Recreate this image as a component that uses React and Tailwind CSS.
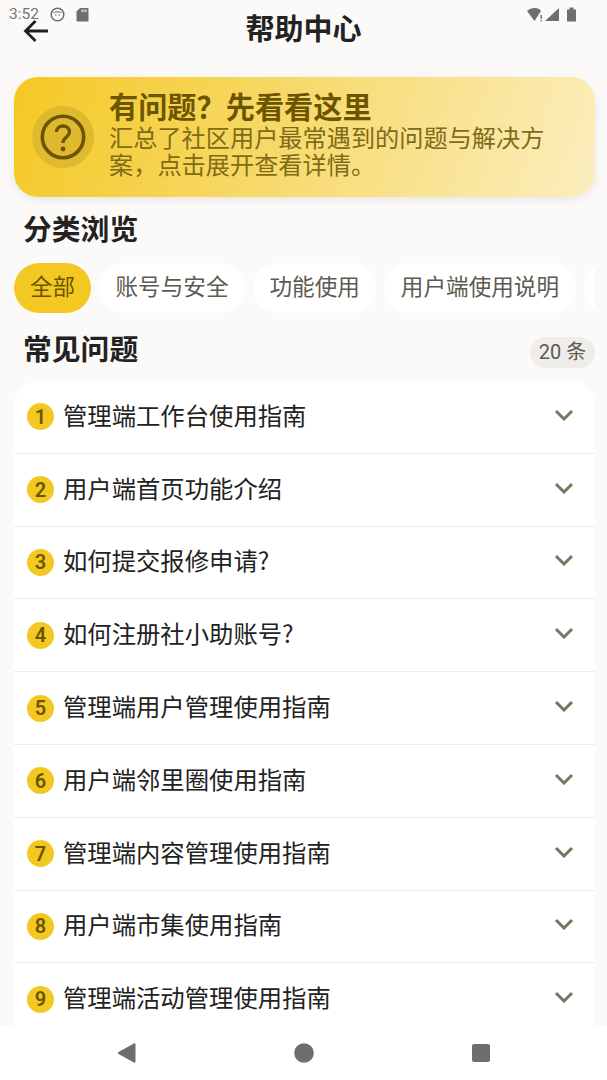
import React from 'react';

const items = ['管理端工作台使用指南','用户端首页功能介绍','如何提交报修申请?','如何注册社小助账号?','管理端用户管理使用指南','用户端邻里圈使用指南','管理端内容管理使用指南','用户端市集使用指南','管理端活动管理使用指南'];
const chips = ['账号与安全','功能使用','用户端使用说明'];

export default function App() {
  return (
    <div lang="zh-CN" className="relative flex h-[1080px] w-[607px] flex-col overflow-hidden bg-[#fcfaf8] font-['Roboto','Noto_Sans_CJK_SC',sans-serif]">
      <div className="absolute left-[9px] right-[30px] top-[6px] flex h-[16px] items-center text-[15.500px] leading-[16px] text-[#757575]">
        <span>3:52</span>
        <svg className="ml-[11px]" width="15" height="15" viewBox="0 0 15 15">
          <circle cx="7.500" cy="7.500" r="6.300" fill="#fff" stroke="#6e6e6e" strokeWidth="1.600" />
          <path d="M3 6.500C3 3.500 12 3.500 12 6.500L10 5.500H5Z" fill="#6e6e6e" />
          <circle cx="5.800" cy="8" r=".8" fill="#6e6e6e" /><circle cx="9.200" cy="8" r=".8" fill="#6e6e6e" />
        </svg>
        <svg className="ml-[11px]" width="13" height="15" viewBox="0 0 13 15">
          <path d="M4 1H11.500A1 1 0 0 1 12.500 2V13.500A1 1 0 0 1 11.500 14.500H1.500A1 1 0 0 1 .5 13.500V4.500Z" fill="#6e6e6e" />
          <path d="M6 2.500V5M8 2.500V5M10 2.500V5" stroke="#fff" strokeWidth="1" />
        </svg>
        <div className="flex-1" />
        <svg width="50" height="16" viewBox="0 0 50 16">
          <path d="M0 5C4 1 12 1 14 5L7.500 15Z" fill="#6e6e6e" />
          <rect x="13.500" y="9" width="1.400" height="4" fill="#6e6e6e" /><rect x="13.500" y="14" width="1.400" height="1.400" fill="#6e6e6e" />
          <path d="M18 15L32 2V15Z" fill="#6e6e6e" />
          <path d="M40 3.500H42.500V1.500H46.500V3.500H49V15.500H40Z" fill="#6e6e6e" />
        </svg>
      </div>

      <header className="relative flex h-[60px] shrink-0 items-center justify-center">
        <svg className="absolute left-[22px] top-[18px]" width="28" height="26" viewBox="0 0 28 26" fill="none" stroke="#1f1f1f" strokeWidth="2.800">
          <path d="M26 13H4M13.500 3L3.500 13L13.500 23" />
        </svg>
        <h1 className="text-[29px] font-semibold leading-[36px] text-[#222222]">帮助中心</h1>
      </header>

      <main className="min-h-0 flex-1 overflow-hidden pl-[14px] pr-[12px] pt-[17px]">
        <section className="flex h-[120px] items-center rounded-[24px] bg-[linear-gradient(110deg,#f4c823,#fbeebf)] pl-[18px] pr-[30px] shadow-[0_3px_10px_rgba(0,0,0,0.08)]">
          <div className="flex h-[62px] w-[62px] shrink-0 items-center justify-center rounded-full bg-[#dfb930]">
            <svg width="48" height="48" viewBox="0 0 48 48" fill="none" stroke="#6b5500" strokeWidth="3.600">
              <circle cx="24" cy="24" r="20.700" />
              <path d="M17.500 19C17.500 11 30.500 11 30.500 19C30.500 24 24 24 24 30" strokeWidth="3.400" />
              <circle cx="24" cy="36" r="2.400" fill="#6b5500" stroke="none" />
            </svg>
          </div>
          <div className="ml-[15px] min-w-0 flex-1 pb-[11px]">
            <h2 className="font-['Noto_Sans_CJK_SC',sans-serif] text-[29.200px] font-bold leading-[36px] text-[#6b5500]">有问题{'\uFF1F'}先看看这里</h2>
            <p className="font-['Noto_Sans_CJK_SC',sans-serif] text-[24.200px] leading-[27px] text-[#806b17]">汇总了社区用户最常遇到的问题与解决方案{'\uFF0C'}点击展开查看详情{'\u3002'}</p>
          </div>
        </section>

        <h2 className="ml-[9px] mt-[13px] text-[28.800px] font-semibold leading-[40px] text-[#222222]">分类浏览</h2>

        <div className="mt-[13px] flex h-[50px] gap-[8px] overflow-hidden">
          <div className="flex shrink-0 items-center rounded-full bg-[#f4c823] px-[16px] text-[22.500px] text-[#6b5500]">全部</div>
          {chips.map((c) => (
            <div key={c} className="flex shrink-0 items-center rounded-full bg-white px-[16.500px] text-[22.600px] text-[#5d5a50]">{c}</div>
          ))}
          <div className="flex shrink-0 items-center rounded-full bg-white px-[17px] text-[22.500px] text-[#5d5a50]">物业</div>
        </div>

        <div className="ml-[9px] mt-[17px] flex h-[40px] items-center justify-between">
          <h2 className="text-[28.800px] font-semibold leading-[40px] text-[#222222]">常见问题</h2>
          <span className="mt-[4px] flex h-[31px] w-[65px] items-center justify-center rounded-full bg-[#efedea] text-[20px] text-[#5d5a50]">20 条</span>
        </div>

        <ul className="mt-[11px] overflow-hidden rounded-t-[24px] bg-white">
          {items.map((t, i) => (
            <li key={t} className="flex h-[72.800px] items-center border-b border-[#eeecea] pl-[13px] pr-[21px]">
              <span className="flex h-[27px] w-[27px] shrink-0 items-center justify-center rounded-full bg-[#f4c823] text-[20px] font-semibold text-[#6b5500]">{i + 1}</span>
              <span className="ml-[9px] flex-1 pb-[4px] font-['Noto_Sans_CJK_SC',sans-serif] text-[24.350px] leading-[32px] text-[#222222]">{t}</span>
              <svg width="20" height="12" viewBox="0 0 20 12" fill="none" stroke="#7b7560" strokeWidth="3" className="-mt-[4px]">
                <path d="M2 2L10 10L18 2" />
              </svg>
            </li>
          ))}
        </ul>
      </main>

      <nav className="flex h-[54px] shrink-0 items-center justify-center gap-[158px] bg-white">
        <svg width="20" height="22" viewBox="0 0 20 22"><path d="M19.500 2.500V19.500C19.500 20.500 18.500 21 17.500 20.300L2.500 12C1.500 11.300 1.500 10.700 2.500 10L17.500 1.700C18.500 1 19.500 1.500 19.500 2.500Z" fill="#6e6e6e" /></svg>
        <svg width="20" height="22" viewBox="0 0 20 22"><circle cx="10" cy="11" r="9.800" fill="#6e6e6e" /></svg>
        <svg width="20" height="22" viewBox="0 0 20 22"><rect x="0" y="2" width="18" height="18" rx="2" fill="#6e6e6e" /></svg>
      </nav>
    </div>
  );
}
